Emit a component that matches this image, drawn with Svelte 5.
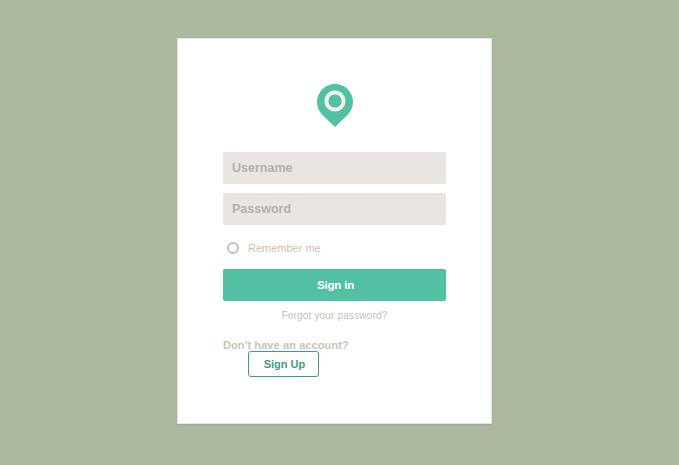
<script>
  let username = $state('');
  let password = $state('');
</script>

<div class="page">
  <div class="card">
    <svg class="pin" width="36" height="43" viewBox="0 0 36 43">
      <path d="M18 0C8 0 0 8 0 18c0 5 2 9.500 5.300 12.800L18 43l12.700-12.200C34 27.500 36 23 36 18 36 8 28 0 18 0z" fill="#52c0a3" />
      <circle cx="18" cy="17" r="8.600" fill="none" stroke="#f1f1ea" stroke-width="4" />
    </svg>

    <form class="form">
      <input class="field" type="text" placeholder="Username" bind:value={username} />
      <input class="field" type="password" placeholder="Password" bind:value={password} />

      <label class="remember">
        <span class="radio"></span>
        <span>Remember me</span>
      </label>

      <button class="signin" type="button">Sign in</button>
      <a class="forgot" href="#forgot">Forgot your password?</a>

      <div class="signup-row">
        <p class="no-account">Don't have an account?</p>
        <button class="signup" type="button">Sign Up</button>
      </div>
    </form>
  </div>
</div>

<style>
  :global(body) {
    margin: 0;
    background: #abb79e;
  }

  .page {
    display: flex;
    justify-content: center;
    height: 465px;
    padding-top: 38px;
    padding-right: 10px;
    box-sizing: border-box;
    font-family: "Liberation Sans", Arial, sans-serif;
  }

  .card {
    width: 315px;
    height: 386px;
    box-sizing: border-box;
    background: #fff;
    border: 1px solid #e4e7e0;
    box-shadow: 0 1px 1px rgba(0, 0, 0, 0.08);
    padding: 45px 45px 0;
    display: flex;
    flex-direction: column;
    align-items: center;
  }

  .pin {
    display: block;
    flex: none;
    margin-bottom: 25px;
  }

  .form {
    width: 223px;
    display: flex;
    flex-direction: column;
  }

  .field {
    height: 32px;
    box-sizing: border-box;
    border: none;
    border-radius: 2px;
    background: #e9e6e1;
    padding: 0 9px;
    margin-bottom: 9px;
    font-family: inherit;
    font-size: 12.500px;
    font-weight: 700;
    outline: none;
  }

  .field::placeholder {
    color: #b3afae;
    opacity: 1;
  }

  .remember {
    display: flex;
    align-items: center;
    gap: 9px;
    height: 17px;
    margin: 5px 0 13px 4px;
    font-size: 11px;
    color: #cbbfae;
  }

  .radio {
    width: 12px;
    height: 12px;
    box-sizing: border-box;
    border: 2px solid #c9c0b2;
    border-radius: 50%;
  }

  .signin {
    height: 32px;
    border: none;
    border-radius: 2px;
    background: #52c0a3;
    color: #fff;
    font-family: inherit;
    font-size: 11.500px;
    font-weight: 700;
    letter-spacing: -0.2px;
    padding: 0 0 0 2px;
  }

  .forgot {
    margin-top: 9px;
    text-align: center;
    font-size: 10px;
    line-height: 12px;
    letter-spacing: 0.17px;
    color: #cbbfae;
    text-decoration: none;
  }

  .signup-row {
    margin-top: 17px;
  }

  .no-account {
    margin: 0;
    font-size: 11px;
    line-height: 12px;
    font-weight: 700;
    letter-spacing: 0.1px;
    color: #cbc3b7;
  }

  .signup {
    display: block;
    width: 71px;
    height: 26px;
    margin: 0 0 0 25px;
    padding: 0 0 0 2px;
    box-sizing: border-box;
    background: #fff;
    border: 1px solid #35a084;
    border-radius: 3px;
    color: #3f9c86;
    font-family: inherit;
    font-size: 11px;
    font-weight: 700;
  }
</style>
